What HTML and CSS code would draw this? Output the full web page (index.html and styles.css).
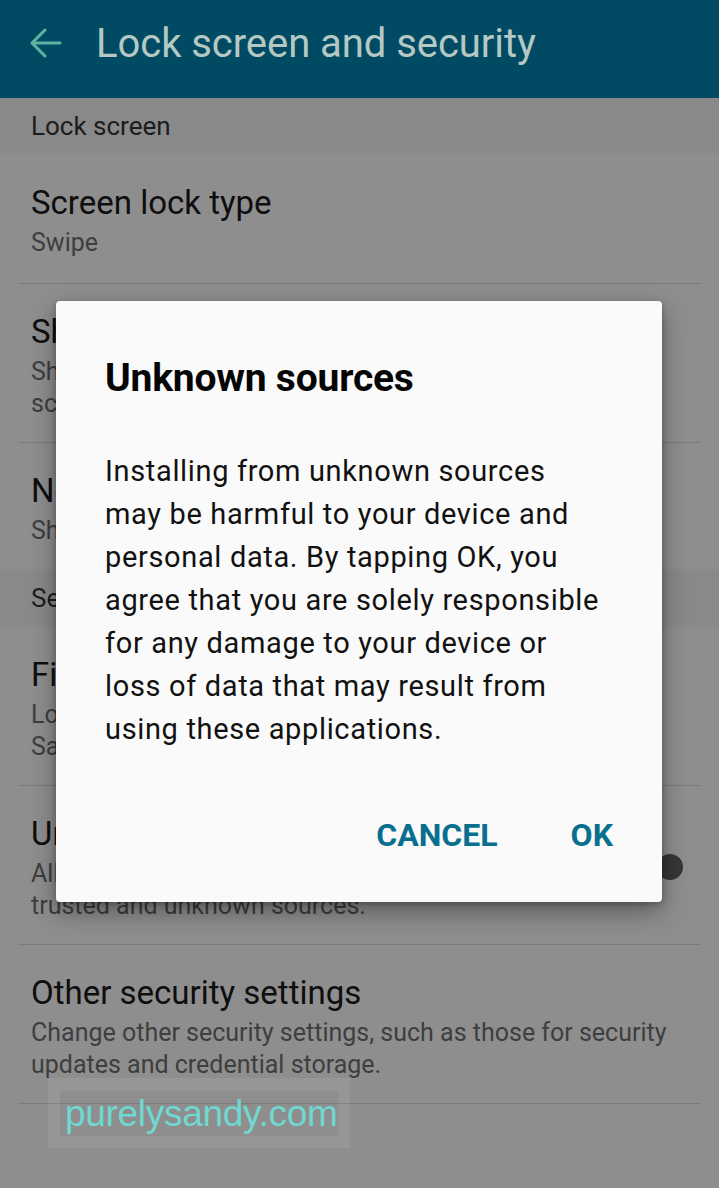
FILE: index.html
```html
<!DOCTYPE html>
<html lang="en">
<head>
<meta charset="utf-8">
<title>Lock screen and security</title>
<link rel="stylesheet" href="styles.css">
</head>
<body>
<div class="screen">
  <header class="appbar">
    <svg class="back" width="34" height="32" viewBox="0 0 34 32" aria-hidden="true">
      <path d="M31 16 H4 M16 3 L3 16 L16 29" fill="none" stroke="#5fb3a1" stroke-width="3" stroke-linecap="round" stroke-linejoin="round"/>
    </svg>
    <h1 class="appbar-title">Lock screen and security</h1>
  </header>

  <div class="section-header">Lock screen</div>
  <div class="item first">
    <div class="item-text">
      <div class="item-title">Screen lock type</div>
      <div class="item-sub">Swipe</div>
    </div>
  </div>
  <div class="item">
    <div class="item-text">
      <div class="item-title">Show information</div>
      <div class="item-sub">Show the date, weather and other information on the<br>screen.</div>
    </div>
  </div>
  <div class="item last">
    <div class="item-text">
      <div class="item-title">Notifications on lock screen</div>
      <div class="item-sub">Show content</div>
    </div>
  </div>

  <div class="section-header tall">Security</div>
  <div class="item">
    <div class="item-text">
      <div class="item-title">Find My Mobile</div>
      <div class="item-sub">Locate and control your device remotely using your<br>Samsung account.</div>
    </div>
  </div>
  <div class="item">
    <div class="item-text">
      <div class="item-title">Unknown sources</div>
      <div class="item-sub">Allow installation of applications from both<br>trusted and unknown sources.</div>
    </div>
    <div class="toggle"><span class="thumb"></span></div>
  </div>
  <div class="item">
    <div class="item-text">
      <div class="item-title">Other security settings</div>
      <div class="item-sub">Change other security settings, such as those for security<br>updates and credential storage.</div>
    </div>
  </div>

  <div class="watermark"><span class="watermark-inner">purelysandy.com</span></div>

  <div class="dialog" role="dialog">
    <h2 class="dialog-title">Unknown sources</h2>
    <p class="dialog-body">Installing from unknown sources<br>may be harmful to your device and<br>personal data. By tapping OK, you<br>agree that you are solely responsible<br>for any damage to your device or<br>loss of data that may result from<br>using these applications.</p>
    <div class="dialog-actions">
      <button class="dialog-btn">CANCEL</button>
      <button class="dialog-btn">OK</button>
    </div>
  </div>
</div>
</body>
</html>
```

FILE: styles.css
```css
* { box-sizing: border-box; }
html, body { margin: 0; padding: 0; }
body {
  width: 719px;
  height: 1188px;
  overflow: hidden;
  background: #8e8e8e;
  font-family: Roboto, "Liberation Sans", sans-serif;
}
.screen {
  position: relative;
  width: 719px;
  height: 1188px;
  overflow: hidden;
  background: #8e8e8e;
}
.appbar {
  height: 98px;
  background: #004b63;
  display: flex;
  align-items: center;
  padding-left: 29px;
  padding-bottom: 12px;
}
.back { display: block; flex: none; }
.appbar-title {
  margin: 0 0 0 33px;
  font-weight: 400;
  font-size: 40px;
  color: #b5c8c3;
  letter-spacing: -0.05px;
}
.section-header {
  height: 55px;
  background: #898989;
  color: #1c1c1c;
  font-size: 26px;
  display: flex;
  align-items: center;
  padding-left: 31px;
}
.section-header.tall { height: 58px; }
.item {
  display: flex;
  align-items: center;
  margin: 0 18px;
  padding: 26px 18px 24px 13px;
  border-bottom: 1.5px solid #7b7b7b;
}
.item.first { padding-top: 28px; padding-bottom: 26px; }
.item.last { border-bottom: none; }
.item-text { flex: 1; min-width: 0; }
.item-title {
  font-size: 33px;
  line-height: 44px;
  color: #0e0e0e;
  white-space: nowrap;
}
.item-sub {
  font-size: 25px;
  line-height: 32px;
  padding-top: 2px;
  margin-bottom: -2px;
  color: #3e3e3e;
  white-space: nowrap;
}
.toggle {
  flex: none;
  width: 26px;
  height: 26px;
  margin-top: 2px;
}
.thumb {
  display: block;
  width: 26px;
  height: 26px;
  border-radius: 50%;
  background: #363636;
}
.watermark {
  position: absolute;
  left: 48px;
  top: 1078px;
  width: 302px;
  height: 70px;
  padding: 13px 12px;
  background: rgba(255,255,255,0.07);
}
.watermark-inner {
  display: block;
  height: 45px;
  padding-left: 5px;
  background: rgba(0,0,0,0.05);
  font-family: "Liberation Sans", Arial, sans-serif;
  font-size: 37px;
  line-height: 45px;
  color: #6fd8d0;
  letter-spacing: -0.3px;
}
.dialog {
  position: absolute;
  left: 56px;
  top: 301px;
  width: 606px;
  height: 601px;
  background: #fafafa;
  border-radius: 4px;
  box-shadow: 0 10px 26px rgba(0,0,0,0.35), 0 2px 6px rgba(0,0,0,0.25);
  padding: 55px 40px 0 49px;
  display: flex;
  flex-direction: column;
}
.dialog-title {
  margin: 0;
  font-size: 39px;
  line-height: 44px;
  font-weight: 700;
  color: #050505;
  letter-spacing: -0.2px;
}
.dialog-body {
  margin: 50px 0 0 0;
  font-size: 29px;
  line-height: 43px;
  color: #111;
  letter-spacing: 0.65px;
  white-space: nowrap;
}
.dialog-actions {
  margin-top: auto;
  margin-bottom: 47px;
  margin-right: 9px;
  display: flex;
  justify-content: flex-end;
  gap: 73px;
}
.dialog-btn {
  border: none;
  background: none;
  padding: 0;
  font-family: Roboto, "Liberation Sans", sans-serif;
  font-size: 32px;
  line-height: 40px;
  font-weight: 700;
  color: #08708e;
}
```
